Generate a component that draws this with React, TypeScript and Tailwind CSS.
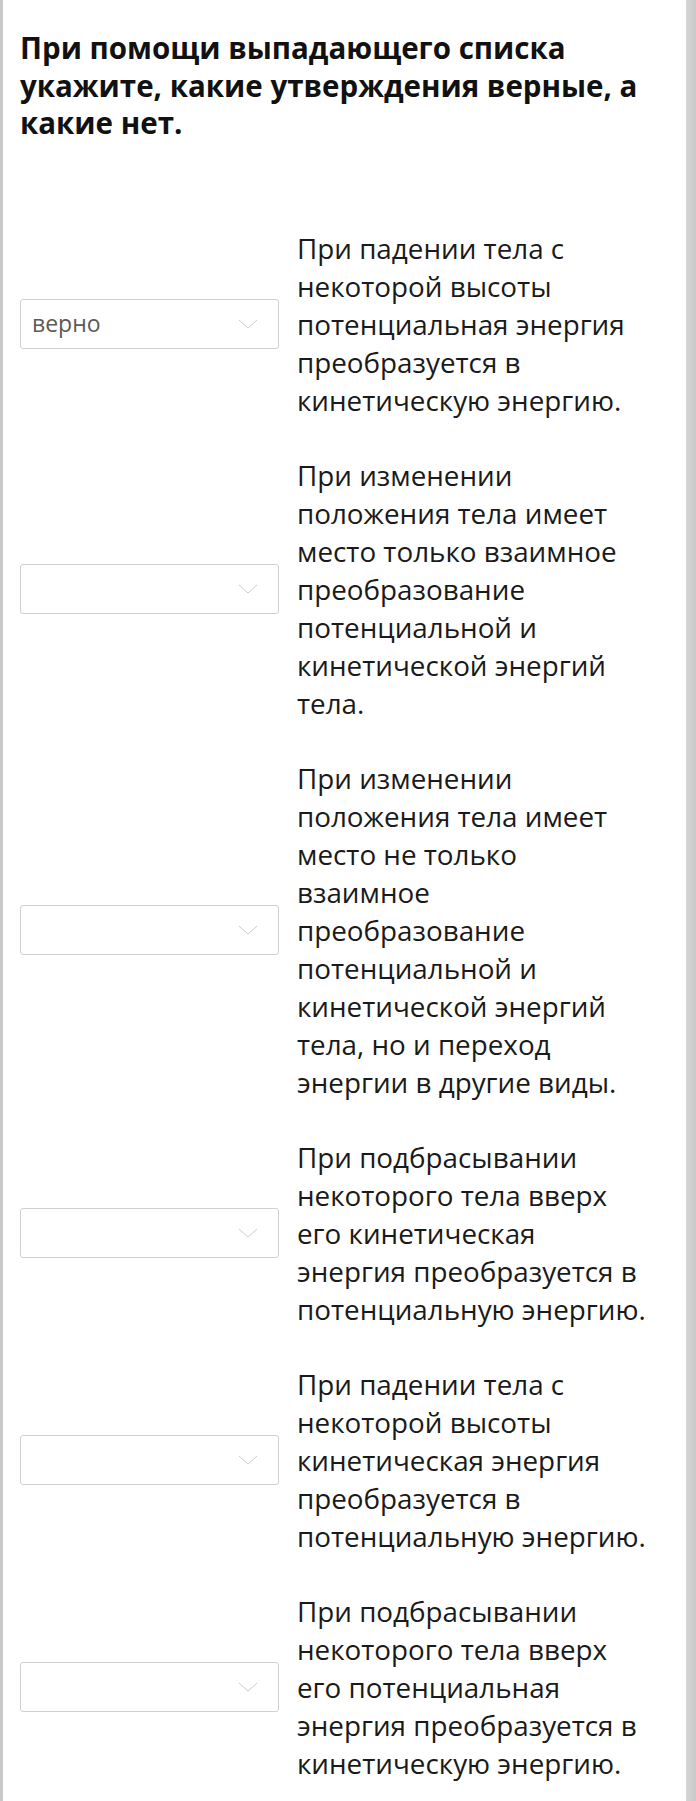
import React from 'react';

const rows: { value: string; text: string }[] = [
  { value: 'верно', text: 'При падении тела с некоторой высоты потенциальная энергия преобразуется в кинетическую энергию.' },
  { value: '', text: 'При изменении положения тела имеет место только взаимное преобразование потенциальной и кинетической энергий тела.' },
  { value: '', text: 'При изменении положения тела имеет место не только взаимное преобразование потенциальной и кинетической энергий тела, но и переход энергии в другие виды.' },
  { value: '', text: 'При подбрасывании некоторого тела вверх его кинетическая энергия преобразуется в потенциальную энергию.' },
  { value: '', text: 'При падении тела с некоторой высоты кинетическая энергия преобразуется в потенциальную энергию.' },
  { value: '', text: 'При подбрасывании некоторого тела вверх его потенциальная энергия преобразуется в кинетическую энергию.' },
];

const Chevron: React.FC = () => (
  <svg width="20" height="10" viewBox="0 0 20 10" fill="none" className="shrink-0">
    <path d="M1 1 L10 9 L19 1" stroke="#cccccc" strokeWidth="1" />
  </svg>
);

const Dropdown: React.FC<{ value: string }> = ({ value }) => (
  <div className="w-[259px] h-[50px] shrink-0 flex items-center justify-between pl-[11px] pr-[20px] border border-[#d0d0d0] rounded-[3px] bg-white">
    <span className="text-[23px] text-[#5a5a5a]">{value}</span>
    <Chevron />
  </div>
);

export default function App() {
  return (
    <div className="flex min-h-[1801px] bg-white font-['Open_Sans',sans-serif]">
      <div className="w-[3px] shrink-0 bg-[#c9c9c9]" />
      <div className="flex-1 pl-[17px] pt-[29px] pb-[19px]">
        <h1 className="text-[29.5px] leading-[37.5px] font-bold text-[#111] pr-[30px]">
          При помощи выпадающего списка укажите, какие утверждения верные, а какие нет.
        </h1>
        <div className="mt-[87px] flex flex-col gap-[37px]">
          {rows.map((r, i) => (
            <div key={i} className="flex items-center gap-[18px]">
              <Dropdown value={r.value} />
              <p className="w-[350px] text-[27.8px] leading-[38px] text-[#1a1a1a]">{r.text}</p>
            </div>
          ))}
        </div>
      </div>
      <div className="w-[10px] shrink-0 bg-gradient-to-r from-[#d6d6d6] to-[#c9c9c9]" />
    </div>
  );
}
